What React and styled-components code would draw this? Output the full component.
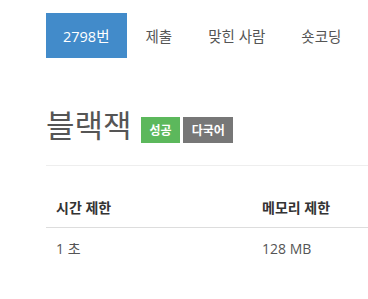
import styled, { createGlobalStyle } from 'styled-components';

const GlobalStyle = createGlobalStyle`
  body {
    margin: 0;
    background: #fff;
    font-family: "Open Sans", "Noto Sans CJK KR", sans-serif;
    color: #555;
    overflow: hidden;
  }
`;

const Page = styled.div`
  padding: 13px 0 0 46px;
`;

const Nav = styled.ul`
  display: flex;
  list-style: none;
  margin: 0;
  padding: 0;
  gap: 2px;
`;

const NavItem = styled.li`
  height: 45px;
  padding: 0 17px;
  display: flex;
  align-items: center;
  font-size: 14.5px;
  white-space: nowrap;
  background: ${(p) => (p.$active ? '#428bca' : 'transparent')};
  color: ${(p) => (p.$active ? '#fff' : '#555')};
`;

const Header = styled.div`
  margin-top: 47px;
  padding-bottom: 20px;
  border-bottom: 1px solid #eee;
  display: flex;
  align-items: flex-end;
  gap: 9px;
`;

const Title = styled.h1`
  margin: 0;
  font-size: 31px;
  font-weight: 400;
  line-height: 40px;
  color: #555;
`;

const Badges = styled.div`
  display: flex;
  gap: 3px;
  margin-bottom: 2px;
`;

const Badge = styled.span`
  display: inline-flex;
  align-items: center;
  height: 26px;
  padding: 0 8px 0 9px;
  font-size: 12px;
  font-weight: 700;
  color: #fff;
  background: ${(p) => p.$bg};
`;

const Table = styled.table`
  margin-top: 22px;
  border-collapse: collapse;
  table-layout: fixed;
  width: 412px;
  font-size: 14px;
`;

const Th = styled.th`
  width: 186px;
  text-align: left;
  font-weight: 700;
  color: #333;
  padding: 10px 10px 9px;
  line-height: 20px;
  border-bottom: 1px solid #ddd;
  white-space: nowrap;
`;

const Td = styled.td`
  padding: 11px 10px 9px;
  line-height: 20px;
  color: #555;
`;

const tabs = ['2798번', '제출', '맞힌 사람', '숏코딩'];

export default function App() {
  return (
    <>
      <GlobalStyle />
      <Page>
        <Nav>
          {tabs.map((t, i) => (
            <NavItem key={t} $active={i === 0}>{t}</NavItem>
          ))}
        </Nav>
        <Header>
          <Title>블랙잭</Title>
          <Badges>
            <Badge $bg="#5cb85c">성공</Badge>
            <Badge $bg="#777">다국어</Badge>
          </Badges>
        </Header>
        <Table>
          <thead>
            <tr>
              <Th>시간 제한</Th>
              <Th>메모리 제한</Th>
            </tr>
          </thead>
          <tbody>
            <tr>
              <Td>1 초</Td>
              <Td>128 MB</Td>
            </tr>
          </tbody>
        </Table>
      </Page>
    </>
  );
}
